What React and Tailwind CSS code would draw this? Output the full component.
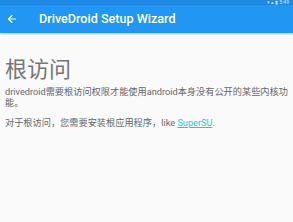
import { ArrowLeft } from "lucide-react";

export default function App() {
  return (
    <div className="w-[293px] h-[222px] bg-[#fafafa] overflow-hidden font-['Roboto','Noto_Sans_CJK_SC',sans-serif]">
      {/* status bar */}
      <div className="h-[5px] bg-[#1e88e5] flex justify-end items-center pr-[4px]">
        <span className="text-[5px] leading-[5px] text-white/80">▾ ▴ ▮ 5:49</span>
      </div>
      {/* toolbar */}
      <div className="h-[28px] bg-[#2196f3] flex items-center shadow-[0_1px_2px_rgba(0,0,0,0.25)]">
        <ArrowLeft className="ml-[6px] w-[12px] h-[12px] text-white" strokeWidth={2.2} />
        <span className="ml-[21px] text-white text-[12.6px] font-medium">DriveDroid Setup Wizard</span>
      </div>
      <div className="pl-[5px] pr-[2px] pt-[23px]">
        <h1 className="text-[22px] leading-[28px] text-[#757575]">根访问</h1>
        <p className="mt-[2px] text-[9.2px] leading-[11px] text-[#666]">
          drivedroid需要根访问权限才能使用android本身没有公开的某些内核功能。
        </p>
        <p className="mt-[9px] text-[9.2px] leading-[11px] text-[#666]">
          对于根访问，您需要安装根应用程序，like <span className="text-[#26c6da] underline">SuperSU</span>.
        </p>
      </div>
    </div>
  );
}
